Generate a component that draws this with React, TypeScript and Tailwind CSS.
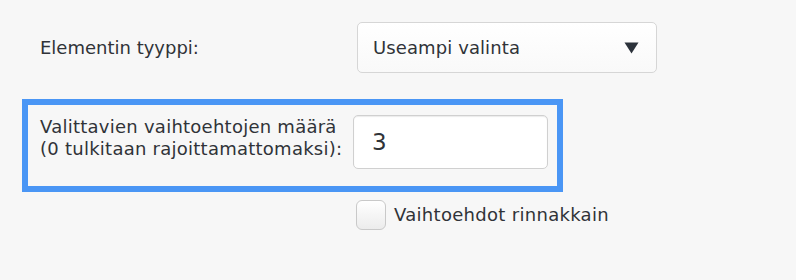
import React from "react";

export default function App() {
  return (
    <div
      className="w-[796px] h-[280px] bg-[#f7f7f7] text-[#303338] pl-[22px] text-[18px] leading-[22px]"
      style={{ fontFamily: '"DejaVu Sans", "Lucida Grande", Verdana, sans-serif' }}
    >
      <div className="flex items-center pt-[22px] pl-[18px]">
        <div className="w-[317px]">Elementin tyyppi:</div>
        <div className="w-[300px] h-[51px] flex items-center justify-between rounded-[5px] border border-[#d6d6d6] bg-gradient-to-b from-white to-[#f9f9f9] pl-[15px] pr-[17px]">
          <span className="tracking-[0.1px]">Useampi valinta</span>
          <svg width="15" height="12" viewBox="0 0 15 12">
            <path d="M0.5 0.5 L14.5 0.5 L7.5 11.5 Z" fill="#2c323b" />
          </svg>
        </div>
      </div>

      <div className="mt-[26px] w-[541px] h-[93px] border-[6px] border-[#4a96f5] flex items-start pl-[12px] pt-[10px]">
        <div className="w-[313px] mt-[1px] tracking-[0.25px]">
          Valittavien vaihtoehtojen määrä
          <br />
          (0 tulkitaan rajoittamattomaksi):
        </div>
        <div className="w-[195px] h-[54px] flex items-center rounded-[5px] border border-[#d0d0d0] bg-white pl-[18px] text-[23px] shadow-[inset_0_1px_1px_rgba(0,0,0,0.08)]">
          3
        </div>
      </div>

      <div className="flex items-center mt-[8px] pl-[334px]">
        <div className="w-[30px] h-[30px] rounded-[6px] border border-[#c9c9c9] bg-gradient-to-b from-white to-[#ececec]" />
        <span className="ml-[8px] tracking-[0.3px]">Vaihtoehdot rinnakkain</span>
      </div>
    </div>
  );
}
